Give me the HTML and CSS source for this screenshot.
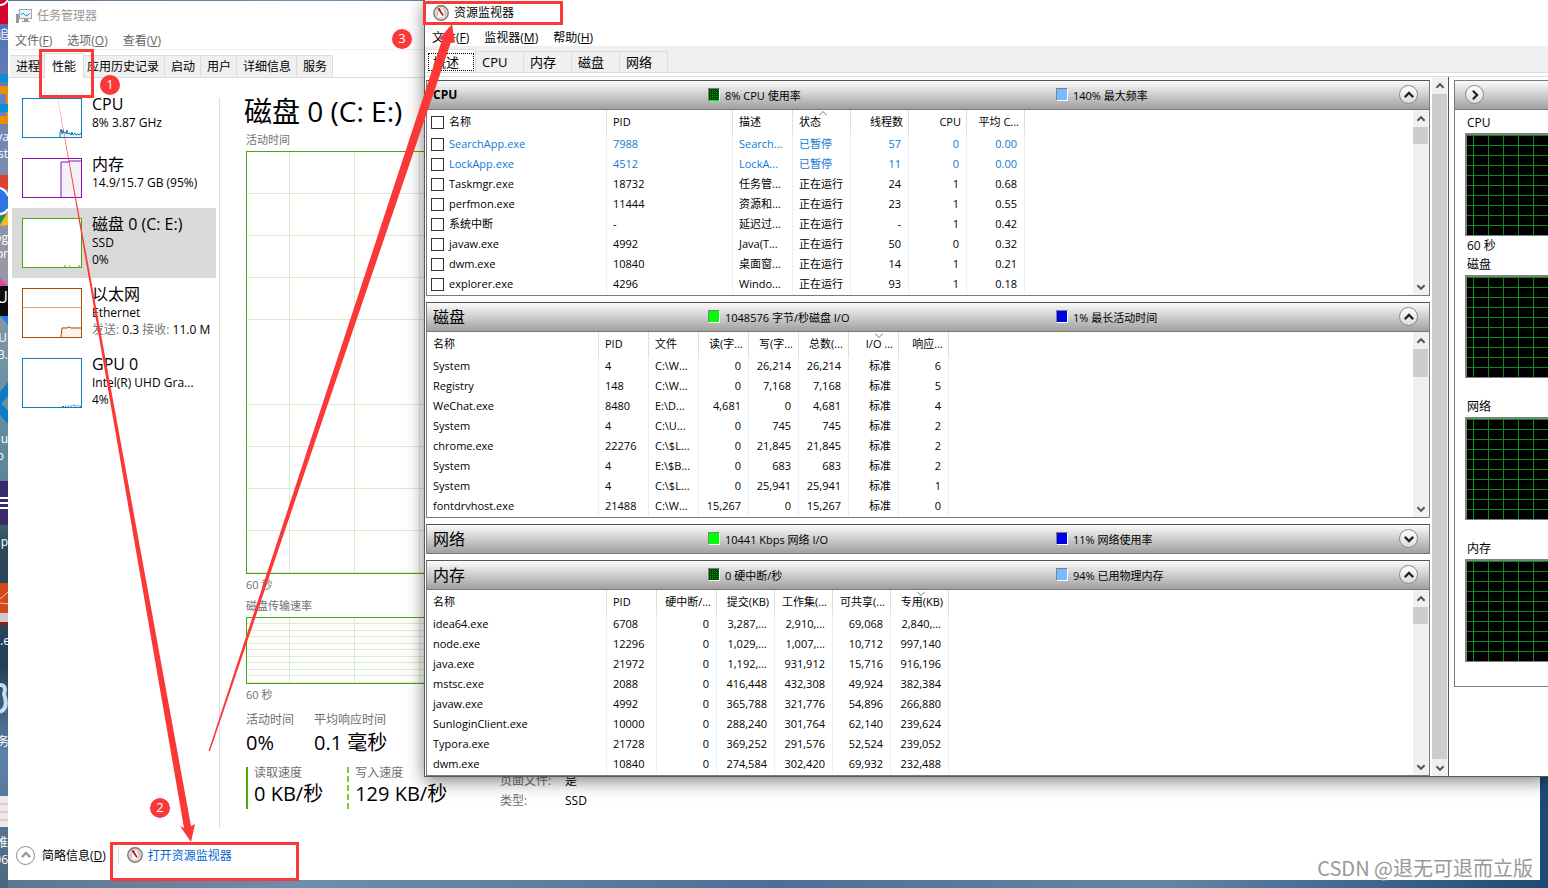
FILE: index.html
```html
<!DOCTYPE html>
<html lang="zh-CN">
<head>
  <meta charset="UTF-8">
  <title>任务管理器 / 资源监视器</title>
  <link rel="stylesheet" href="styles.css">
</head>
<body>

  <!-- shared icons -->
  <svg class="sprite" aria-hidden="true">
    <symbol id="gauge" viewBox="0 0 16 16">
      <circle cx="8" cy="8" r="7.2" fill="#f4f2ee" stroke="#77736f" stroke-width="1.4"/>
      <circle cx="8" cy="8" r="5.2" fill="#fff" stroke="#c9c2b6" stroke-width="1"/>
      <path d="M4.5 10.5a4.3 4.3 0 0 1 1-5M10 4.4a4.3 4.3 0 0 1 1.6 6" fill="none" stroke="#a8a095" stroke-width="1"/>
      <path d="M4.2 3.4l2.3-.5 4.2 7.2-1.2.8z" fill="#c8141c"/>
    </symbol>
    <symbol id="chev-up" viewBox="0 0 10 10"><path d="M2 6.500L5 3.500 8 6.500" fill="none" stroke="currentColor" stroke-width="1.6"/></symbol>
    <symbol id="chev-down" viewBox="0 0 10 10"><path d="M2 3.500L5 6.500 8 3.500" fill="none" stroke="currentColor" stroke-width="1.6"/></symbol>
    <symbol id="chev-right" viewBox="0 0 10 10"><path d="M3.500 2L6.500 5 3.500 8" fill="none" stroke="currentColor" stroke-width="1.6"/></symbol>
  </svg>

  <!-- Desktop, only its left edge shows -->
  <svg class="desktop-icons" aria-hidden="true">
    <rect width="8" height="24" fill="#d2062c"/>
    <path d="M0 5q5 0 8-5" fill="none" stroke="#fff" stroke-width="2"/>
    <rect y="74" width="8" height="8" fill="#0a8fd0"/>
    <rect y="86" width="8" height="38" fill="#f08c00"/>
    <rect y="94" width="6" height="10" fill="#5f86c4"/>
    <rect y="104" width="8" height="8" fill="#0a8fd0"/>
    <rect y="112" width="6" height="4" fill="#5f86c4"/>
    <rect y="175" width="8" height="14" fill="#e0402f"/>
    <path d="M0 188q6 2 8 8v14q-3 4-8 5z" fill="#2e74e4"/>
    <path d="M0 188q6 2 8 8M0 214q6-1 8-5" fill="none" stroke="#fff" stroke-width="2"/>
    <path d="M0 216l6-2-6 10z" fill="#1d9145"/>
    <path d="M0 226l8-14v13z" fill="#f8bd10"/>
    <path d="M0 278l8 8H0z" fill="#e5489a"/>
    <rect y="286" width="8" height="30" fill="#0c0c0e"/>
    <path d="M0 316h8v9z" fill="#1f82ea"/>
    <path d="M8 382v14l-8 9v-13zM0 402l8 9v13l-8-9z" fill="#0a7cc8"/>
    <rect y="481" width="8" height="44" fill="#3a2a6c"/>
    <path d="M0 498h8M0 503h8M0 508h8" stroke="#fff" stroke-width="2"/>
    <rect y="583" width="8" height="30" fill="#d0481c"/>
    <path d="M0 599l8-7M0 603l8 1" stroke="#f3c3a8"/>
    <rect y="613" width="8" height="9" fill="#c9cbd0"/>
    <rect y="622" width="8" height="3" fill="#941a14"/>
    <path d="M0 685q7 0 4 9 5 14-4 18" fill="none" stroke="#c3ddf4" stroke-width="4"/>
    <rect y="796" width="8" height="31" fill="#eee9ea"/>
    <path d="M0 804h8M0 812h8M0 820h8" stroke="#dba5a5"/>
    <g fill="#fff" font-size="12" text-anchor="end">
      <text x="9" y="39">追</text><text x="9" y="141">va</text><text x="8" y="158">st</text>
      <text x="8" y="242">og</text><text x="8" y="258">or</text><text x="8" y="303" font-size="16">U</text>
      <text x="7" y="342">U</text><text x="8" y="359">3.</text><text x="8" y="443">u</text>
      <text x="4" y="460">o</text><text x="8" y="546">p</text><text x="10" y="645">.e</text>
      <text x="9" y="746">务</text><text x="8" y="847">推</text><text x="8" y="864">06</text>
    </g>
  </svg>

  <!-- Task manager -->
  <section class="window taskmgr">
    <header class="titlebar">
      <svg width="16" height="16" viewBox="0 0 16 16">
        <rect x="0" y="6" width="3" height="9" fill="#9a9a9a"/>
        <rect x="3.500" y="1.500" width="12" height="9" fill="#e6f5fd" stroke="#a2a6a9"/>
        <path d="M5 7l2-2 2 2 2 1 3-3" fill="none" stroke="#2a8fc4"/>
        <path d="M8 11h4v2h2v1H6v-1h2z" fill="#999"/>
      </svg>
      <h1>任务管理器</h1>
    </header>
    <nav class="menu">
      <a href="#">文件(<u>F</u>)</a><a href="#">选项(<u>O</u>)</a><a href="#">查看(<u>V</u>)</a>
    </nav>
    <div class="tabs">
      <button>进程</button><button class="active">性能</button><button>应用历史记录</button><button>启动</button><button>用户</button><button>详细信息</button><button>服务</button>
    </div>

    <div class="tm-body">
      <aside>
        <ul class="devices">
          <li>
            <svg class="thumb blue" viewBox="0 0 58 38"><path d="M37 38v-5l1-3 1 5 1-4 1 3 1-1 1 2 1-4 1 4 2-1 1 2 1-3 1 3 2-2 1 2 2-1 1 1 2-2 1 3" fill="#e4f1f9" stroke="#117dbb"/></svg>
            <div><h3>CPU</h3><p>8% 3.87 GHz</p></div>
          </li>
          <li>
            <svg class="thumb purple" viewBox="0 0 58 38"><path d="M38 38V3h8V2h12v36z" fill="#f4f0f7"/><path d="M38 38V3h8V2h12" fill="none" stroke="#8b12ae"/></svg>
            <div><h3>内存</h3><p>14.9/15.7 GB (95%)</p></div>
          </li>
          <li class="tall selected">
            <svg class="thumb green" viewBox="0 0 58 48"><path d="M41 47h2M46 47h1M55 47h2" stroke="#4da60c"/></svg>
            <div><h3>磁盘 0 (C: E:)</h3><p>SSD</p><p>0%</p></div>
          </li>
          <li class="tall">
            <svg class="thumb brown" viewBox="0 0 58 48"><path d="M0 18.500h58" stroke="#d3a583"/><path d="M38 48l1-10h5l2-1 2 1h10v10z" fill="#fcf3eb"/><path d="M38 48l1-9h5l2-1 2 1h10" fill="none" stroke="#a74f01"/></svg>
            <div><h3>以太网</h3><p>Ethernet</p><p><span>发送:</span> 0.3 <span>接收:</span> 11.0 M</p></div>
          </li>
          <li class="tall">
            <svg class="thumb blue" viewBox="0 0 58 48"><path d="M39 47.500h4l1-1 1 1 2-1 2 1 2-2 1 2 2-1 4 1" fill="none" stroke="#117dbb" stroke-dasharray="2 1"/></svg>
            <div><h3>GPU 0</h3><p>Intel(R) UHD Gra...</p><p>4%</p></div>
          </li>
        </ul>
      </aside>

      <main>
        <h2>磁盘 0 (C: E:)</h2>
        <p class="chart-label">活动时间</p>
        <div class="chart grow"></div>
        <p class="chart-time">60 秒</p>
        <p class="chart-label">磁盘传输速率</p>
        <div class="chart rate-chart"></div>
        <p class="chart-time">60 秒</p>
        <div class="stats">
          <div class="stats-left">
            <div class="stat-row">
              <div class="stat"><span>活动时间</span><b>0%</b></div>
              <div class="stat"><span>平均响应时间</span><b>0.1 毫秒</b></div>
            </div>
            <div class="stat-row rates">
              <div class="stat read"><span>读取速度</span><b>0 KB/秒</b></div>
              <div class="stat write"><span>写入速度</span><b>129 KB/秒</b></div>
            </div>
          </div>
          <dl>
            <dt>页面文件:</dt><dd>是</dd>
            <dt>类型:</dt><dd>SSD</dd>
          </dl>
        </div>
      </main>
    </div>

    <footer class="tm-footer">
      <button class="round plain" aria-label="折叠"><svg width="14" height="14"><use href="#chev-up"/></svg></button>
      <a class="brief" href="#">简略信息(<u>D</u>)</a>
      <a class="open-link" href="#"><svg width="16" height="16"><use href="#gauge"/></svg>打开资源监视器</a>
    </footer>
  </section>

  <!-- Resource monitor -->
  <section class="window resmon">
    <header class="titlebar">
      <svg width="16" height="16"><use href="#gauge"/></svg>
      <h1>资源监视器</h1>
    </header>
    <nav class="menu">
      <a href="#">文件(<u>F</u>)</a><a href="#">监视器(<u>M</u>)</a><a href="#">帮助(<u>H</u>)</a>
    </nav>
    <div class="tabs">
      <button class="active"><span>概述</span></button><button>CPU</button><button>内存</button><button>磁盘</button><button>网络</button>
    </div>

    <div class="rm-body">
      <div class="panels">

        <section class="panel">
          <div class="bar">
            <h2 class="bold">CPU</h2>
            <span class="legend"><i class="dark"></i>8% CPU 使用率</span>
            <span class="legend"><i class="sky"></i>140% 最大频率</span>
            <button class="round" aria-label="收起"><svg width="14" height="14"><use href="#chev-up"/></svg></button>
          </div>
          <div class="list">
            <table>
              <colgroup><col class="w180"><col class="w126"><col class="w60"><col class="w58"><col class="w58"><col class="w58"><col class="w58"></colgroup>
              <thead>
                <tr><th><label><input type="checkbox">名称</label></th><th>PID</th><th>描述</th><th class="sort">状态<svg width="8" height="5"><path d="M0 4.500l4-4 4 4"/></svg></th><th class="num">线程数</th><th class="num">CPU</th><th class="num">平均 C...</th></tr>
              </thead>
              <tbody>
                <tr class="paused"><td><label><input type="checkbox">SearchApp.exe</label></td><td>7988</td><td>Search...</td><td>已暂停</td><td class="num">57</td><td class="num">0</td><td class="num">0.00</td></tr>
                <tr class="paused"><td><label><input type="checkbox">LockApp.exe</label></td><td>4512</td><td>LockA...</td><td>已暂停</td><td class="num">11</td><td class="num">0</td><td class="num">0.00</td></tr>
                <tr><td><label><input type="checkbox">Taskmgr.exe</label></td><td>18732</td><td>任务管...</td><td>正在运行</td><td class="num">24</td><td class="num">1</td><td class="num">0.68</td></tr>
                <tr><td><label><input type="checkbox">perfmon.exe</label></td><td>11444</td><td>资源和...</td><td>正在运行</td><td class="num">23</td><td class="num">1</td><td class="num">0.55</td></tr>
                <tr><td><label><input type="checkbox">系统中断</label></td><td>-</td><td>延迟过...</td><td>正在运行</td><td class="num">-</td><td class="num">1</td><td class="num">0.42</td></tr>
                <tr><td><label><input type="checkbox">javaw.exe</label></td><td>4992</td><td>Java(T...</td><td>正在运行</td><td class="num">50</td><td class="num">0</td><td class="num">0.32</td></tr>
                <tr><td><label><input type="checkbox">dwm.exe</label></td><td>10840</td><td>桌面窗...</td><td>正在运行</td><td class="num">14</td><td class="num">1</td><td class="num">0.21</td></tr>
                <tr><td><label><input type="checkbox">explorer.exe</label></td><td>4296</td><td>Windo...</td><td>正在运行</td><td class="num">93</td><td class="num">1</td><td class="num">0.18</td></tr>
              </tbody>
            </table>
            <div class="scroll">
              <button aria-label="向上"><svg width="12" height="12"><use href="#chev-up"/></svg></button>
              <div class="thumb-bar"></div>
              <button aria-label="向下"><svg width="12" height="12"><use href="#chev-down"/></svg></button>
            </div>
          </div>
        </section>

        <section class="panel">
          <div class="bar">
            <h2>磁盘</h2>
            <span class="legend"><i class="lime"></i>1048576 字节/秒磁盘 I/O</span>
            <span class="legend"><i class="navy"></i>1% 最长活动时间</span>
            <button class="round" aria-label="收起"><svg width="14" height="14"><use href="#chev-up"/></svg></button>
          </div>
          <div class="list">
            <table>
              <colgroup><col class="w172"><col class="w50"><col class="w50"><col class="w50"><col class="w50"><col class="w50"><col class="w50"><col class="w50"></colgroup>
              <thead>
                <tr><th>名称</th><th>PID</th><th>文件</th><th class="num">读(字...</th><th class="num">写(字...</th><th class="num">总数(...</th><th class="num sort">I/O ...<svg width="8" height="5"><path d="M0 .5l4 4 4-4"/></svg></th><th class="num">响应...</th></tr>
              </thead>
              <tbody>
                <tr><td>System</td><td>4</td><td>C:\W...</td><td class="num">0</td><td class="num">26,214</td><td class="num">26,214</td><td class="num">标准</td><td class="num">6</td></tr>
                <tr><td>Registry</td><td>148</td><td>C:\W...</td><td class="num">0</td><td class="num">7,168</td><td class="num">7,168</td><td class="num">标准</td><td class="num">5</td></tr>
                <tr><td>WeChat.exe</td><td>8480</td><td>E:\D...</td><td class="num">4,681</td><td class="num">0</td><td class="num">4,681</td><td class="num">标准</td><td class="num">4</td></tr>
                <tr><td>System</td><td>4</td><td>C:\U...</td><td class="num">0</td><td class="num">745</td><td class="num">745</td><td class="num">标准</td><td class="num">2</td></tr>
                <tr><td>chrome.exe</td><td>22276</td><td>C:\$L...</td><td class="num">0</td><td class="num">21,845</td><td class="num">21,845</td><td class="num">标准</td><td class="num">2</td></tr>
                <tr><td>System</td><td>4</td><td>E:\$B...</td><td class="num">0</td><td class="num">683</td><td class="num">683</td><td class="num">标准</td><td class="num">2</td></tr>
                <tr><td>System</td><td>4</td><td>C:\$L...</td><td class="num">0</td><td class="num">25,941</td><td class="num">25,941</td><td class="num">标准</td><td class="num">1</td></tr>
                <tr><td>fontdrvhost.exe</td><td>21488</td><td>C:\W...</td><td class="num">15,267</td><td class="num">0</td><td class="num">15,267</td><td class="num">标准</td><td class="num">0</td></tr>
              </tbody>
            </table>
            <div class="scroll">
              <button aria-label="向上"><svg width="12" height="12"><use href="#chev-up"/></svg></button>
              <div class="thumb-bar long"></div>
              <button aria-label="向下"><svg width="12" height="12"><use href="#chev-down"/></svg></button>
            </div>
          </div>
        </section>

        <section class="panel">
          <div class="bar">
            <h2>网络</h2>
            <span class="legend"><i class="lime"></i>10441 Kbps 网络 I/O</span>
            <span class="legend"><i class="navy"></i>11% 网络使用率</span>
            <button class="round" aria-label="展开"><svg width="14" height="14"><use href="#chev-down"/></svg></button>
          </div>
        </section>

        <section class="panel">
          <div class="bar">
            <h2>内存</h2>
            <span class="legend"><i class="dark idle"></i>0 硬中断/秒</span>
            <span class="legend"><i class="sky"></i>94% 已用物理内存</span>
            <button class="round" aria-label="收起"><svg width="14" height="14"><use href="#chev-up"/></svg></button>
          </div>
          <div class="list">
            <table>
              <colgroup><col class="w180"><col class="w50"><col class="w60"><col class="w58"><col class="w58"><col class="w58"><col class="w58"></colgroup>
              <thead>
                <tr><th>名称</th><th>PID</th><th class="num">硬中断/...</th><th class="num">提交(KB)</th><th class="num">工作集(...</th><th class="num">可共享(...</th><th class="num sort">专用(KB)<svg width="8" height="5"><path d="M0 .5l4 4 4-4"/></svg></th></tr>
              </thead>
              <tbody>
                <tr><td>idea64.exe</td><td>6708</td><td class="num">0</td><td class="num">3,287,...</td><td class="num">2,910,...</td><td class="num">69,068</td><td class="num">2,840,...</td></tr>
                <tr><td>node.exe</td><td>12296</td><td class="num">0</td><td class="num">1,029,...</td><td class="num">1,007,...</td><td class="num">10,712</td><td class="num">997,140</td></tr>
                <tr><td>java.exe</td><td>21972</td><td class="num">0</td><td class="num">1,192,...</td><td class="num">931,912</td><td class="num">15,716</td><td class="num">916,196</td></tr>
                <tr><td>mstsc.exe</td><td>2088</td><td class="num">0</td><td class="num">416,448</td><td class="num">432,308</td><td class="num">49,924</td><td class="num">382,384</td></tr>
                <tr><td>javaw.exe</td><td>4992</td><td class="num">0</td><td class="num">365,788</td><td class="num">321,776</td><td class="num">54,896</td><td class="num">266,880</td></tr>
                <tr><td>SunloginClient.exe</td><td>10000</td><td class="num">0</td><td class="num">288,240</td><td class="num">301,764</td><td class="num">62,140</td><td class="num">239,624</td></tr>
                <tr><td>Typora.exe</td><td>21728</td><td class="num">0</td><td class="num">369,252</td><td class="num">291,576</td><td class="num">52,524</td><td class="num">239,052</td></tr>
                <tr><td>dwm.exe</td><td>10840</td><td class="num">0</td><td class="num">274,584</td><td class="num">302,420</td><td class="num">69,932</td><td class="num">232,488</td></tr>
              </tbody>
            </table>
            <div class="scroll">
              <button aria-label="向上"><svg width="12" height="12"><use href="#chev-up"/></svg></button>
              <div class="thumb-bar"></div>
              <button aria-label="向下"><svg width="12" height="12"><use href="#chev-down"/></svg></button>
            </div>
          </div>
        </section>
      </div>

      <div class="scroll outer">
        <button aria-label="向上"><svg width="12" height="12"><use href="#chev-up"/></svg></button>
        <div class="thumb-bar full"></div>
        <button aria-label="向下"><svg width="12" height="12"><use href="#chev-down"/></svg></button>
      </div>

      <aside class="graphs">
        <div class="graphs-panel">
          <div class="bar"><button class="round" aria-label="隐藏图表"><svg width="14" height="14"><use href="#chev-right"/></svg></button></div>
          <figure><figcaption>CPU</figcaption><div class="graph"></div><p>60 秒</p></figure>
          <figure><figcaption>磁盘</figcaption><div class="graph"></div><p></p></figure>
          <figure><figcaption>网络</figcaption><div class="graph"></div><p></p></figure>
          <figure><figcaption>内存</figcaption><div class="graph"></div><p></p></figure>
        </div>
      </aside>
    </div>
  </section>

  <!-- Numbered steps drawn over both windows -->
  <svg class="marks">
    <g fill="none" stroke="#fb3838" stroke-width="3">
      <rect x="40.500" y="50.500" width="52" height="46"/>
      <rect x="111.500" y="843.500" width="186" height="36"/>
      <rect x="424.500" y="2.500" width="137" height="21"/>
    </g>
    <g fill="#fb3838">
      <path d="M55 83L184 828l-4-2 11 16 4-18-4 2z"/>
      <path d="M208.500 751h1.500L451 42l4 1-3-19-13 15 3 1z"/>
      <circle cx="110" cy="85" r="10"/><circle cx="160" cy="808" r="10"/><circle cx="402" cy="39" r="10"/>
    </g>
    <g fill="#fff" font-size="13" text-anchor="middle">
      <text x="110" y="89">1</text><text x="160" y="812">2</text><text x="402" y="43">3</text>
    </g>
  </svg>

  <p class="watermark">CSDN @退无可退而立版</p>

</body>
</html>
```
FILE: styles.css
```css
* {
  box-sizing: border-box;
}

body {
  margin: 0;
  min-height: 100vh;
  position: relative;
  overflow: hidden;
  font-family: "Open Sans", "Noto Sans CJK SC", sans-serif;
  font-size: 12px;
  color: #000;
  background: linear-gradient(to right, #5d7690, #6f8dad 20%, #4d6f93 50%, #6585a5 75%, #1d4a74);
}

h1, h2, h3, p, ul, dl, dd, figure {
  margin: 0;
  padding: 0;
  font-weight: normal;
}

a {
  color: inherit;
  text-decoration: none;
}

button {
  font: inherit;
  color: inherit;
  padding: 0;
  border: none;
  background: none;
}

.sprite {
  position: absolute;
  width: 0;
  height: 0;
}

.desktop-icons {
  position: absolute;
  left: 0;
  top: 0;
  width: 8px;
  height: 100%;
  background: linear-gradient(#4a6fb8, #7186b4 15%, #9a96a6 30%, #6d93a6 42%, #5c8598 54%, #2d4858 62%, #24405a 75%, #5d83a8 85%, #4d6680);
}

.window {
  position: absolute;
  background: #fff;
  display: flex;
  flex-direction: column;
}

.titlebar {
  display: flex;
  align-items: center;
  gap: 5px;
}

.titlebar h1 {
  font-size: 12px;
  line-height: 16px;
}

.menu {
  display: flex;
  gap: 15px;
}

.tabs {
  display: flex;
  align-items: flex-end;
}

.tabs button {
  background: #f0f0f0;
  border: 1px solid #dcdcdc;
  border-bottom: none;
  border-left: none;
}

.tabs .active {
  background: #fff;
}

/* ---- task manager ---- */
.taskmgr {
  top: 1px;
  left: 8px;
  right: 8px;
  bottom: 8px;
}

.taskmgr .titlebar {
  height: 30px;
  padding-left: 8px;
  color: #999;
}

.taskmgr .menu {
  height: 19px;
  padding-left: 7px;
  line-height: 20px;
  color: #666;
  border-bottom: 1px solid #f0f0f0;
}

.taskmgr .tabs {
  height: 28px;
  padding-left: 2px;
  border-bottom: 1px solid #dcdcdc;
}

.taskmgr .tabs button {
  height: 22px;
  padding: 0 5px 0 6px;
  line-height: 21px;
}

.taskmgr .tabs .active {
  position: relative;
  z-index: 1;
  height: 25px;
  padding: 0 7px;
  margin: 0 -3px -1px -2px;
  border-left: 1px solid #dcdcdc;
}

.tm-body {
  flex: 1;
  display: flex;
  padding-top: 20px;
}

.tm-body aside {
  flex: 0 0 212px;
  border-right: 1px solid #dcdcdc;
}

.devices {
  list-style: none;
  margin: -10px 3px 0 4px;
}

.devices li {
  display: flex;
  gap: 10px;
  height: 60px;
  padding: 0 10px;
  white-space: nowrap;
}

.devices .tall {
  height: 70px;
}

.devices .selected {
  background: #d9d9d9;
}

.devices h3 {
  margin-top: 6px;
  font-size: 16px;
  line-height: 20px;
}

.devices p {
  line-height: 17px;
}

.devices p span {
  color: #777;
}

.thumb {
  flex: none;
  width: 60px;
  height: 40px;
  margin-top: 10px;
  background: #fff;
  border: 1px solid;
}

.tall .thumb {
  height: 50px;
}

.blue { border-color: #117dbb; }
.purple { border-color: #8b12ae; }
.green { border-color: #4da60c; }
.brown { border-color: #a74f01; }

.tm-body aside {
  flex-shrink: 0;
  min-width: 0;
}

.taskmgr main {
  flex: 1;
  display: flex;
  flex-direction: column;
  padding: 0 20px 0 26px;
}

main h2 {
  font-size: 28px;
  line-height: 26px;
  margin: 0 0 5px -2px;
}

.chart-label, .chart-time {
  font-size: 11px;
  line-height: 22px;
  color: #707070;
}

.chart-time {
  line-height: 21px;
}

.chart {
  border: 1px solid #4da60c;
  background-image:
    linear-gradient(to right, #d9ebcb 1px, transparent 1px),
    repeating-linear-gradient(transparent 0, transparent calc(10% - 1px), #d9ebcb calc(10% - 1px), #d9ebcb 10%);
  background-size: 65px 100%, 100% 100%;
  background-position: 42px 0, 0 0;
}

.grow {
  flex: 1;
}

.rate-chart {
  height: 67px;
}

.stats {
  display: flex;
  padding: 6px 0 17px;
}

.stats-left {
  flex: 0 0 254px;
  padding-bottom: 2px;
}

.stat-row {
  display: flex;
  gap: 20px;
}

.stat span, .stat b {
  display: block;
  line-height: 18px;
  color: #707070;
}

.stat b {
  font-size: 20px;
  font-weight: normal;
  line-height: 28px;
  color: #000;
}

.stat:first-child {
  min-width: 48px;
}

.rates {
  margin-top: 10px;
  gap: 24px;
}

.rates .stat {
  padding-left: 6px;
  border-left: 2px solid #4da60c;
}

.rates .stat span {
  line-height: 12px;
}

.rates .stat b {
  line-height: 30px;
}

.rates .write {
  border-left: 2px dashed #7bd024;
}

.stats dl {
  align-self: flex-end;
  display: grid;
  grid-template-columns: 65px auto;
  line-height: 20px;
}

.stats dt {
  color: #707070;
}

.tm-footer {
  height: 52px;
  padding: 2px 8px 0;
  display: flex;
  align-items: center;
}

.brief {
  margin: 0 12px 0 7px;
}

.open-link {
  display: flex;
  align-items: center;
  gap: 5px;
  padding-left: 8px;
  border-left: 1px solid #dcdcdc;
  color: #0066cc;
}

.round {
  width: 19px;
  height: 19px;
  display: flex;
  align-items: center;
  justify-content: center;
  border: 1px solid #8a8a8a;
  border-radius: 50%;
  background: linear-gradient(#fff, #dcdcdc);
  color: #222;
}

.plain {
  background: #fff;
  color: #999;
}

/* ---- resource monitor ---- */
.resmon {
  top: 0;
  left: 424px;
  right: 0;
  border-left: 1px solid #5a5a5a;
  border-bottom: 1px solid #5a5a5a;
  box-shadow: 0 4px 16px rgba(0, 0, 0, 0.5);
}

.resmon .titlebar {
  height: 25px;
  padding-left: 8px;
}

.resmon .menu {
  height: 21px;
  padding: 4px 0 0 7px;
  line-height: 18px;
}

.resmon .tabs {
  height: 27px;
  padding-left: 1px;
  font-size: 13px;
  background: #f0f0f0;
  border-bottom: 1px solid #dcdcdc;
}

.resmon .tabs button {
  width: 48px;
  height: 21px;
  padding-left: 6px;
  line-height: 18px;
  text-align: left;
}

.resmon .tabs .active {
  width: 50px;
  height: 23px;
  padding: 2px 1px 1px 2px;
}

.tabs .active span {
  display: block;
}

.resmon .active span {
  padding-left: 4px;
  line-height: 16px;
  border: 1px dotted #000;
}

.rm-body {
  display: flex;
  margin-top: 3px;
  border-top: 1px solid #dcdcdc;
}

.panels {
  flex: 1;
  padding: 3px 2px 0 1px;
  display: flex;
  flex-direction: column;
  gap: 6px;
}

.panel {
  border: 1px solid #7a7a7a;
  border-top-color: #555;
}

.bar {
  height: 29px;
  display: grid;
  grid-template-columns: 275px 348px 1fr 19px;
  align-items: center;
  padding: 0 11px 1px 6px;
  background: linear-gradient(#fbfbfb, #a0a0a0);
}

.panel .bar:not(:last-child), .graphs .bar {
  border-bottom: 1px solid #7a7a7a;
}

.panel:nth-child(3) .bar {
  height: 28px;
}

.bar h2 {
  font-size: 16px;
  line-height: 20px;
}

.bar .bold {
  font-size: 12px;
  font-weight: bold;
}

.bar .round {
  grid-column: 4;
}

.legend {
  display: flex;
  align-items: center;
  gap: 5px;
  font-size: 11px;
}

.legend i {
  width: 12px;
  height: 13px;
  border: 1px solid #808080;
  border-right-color: #fff;
  border-bottom-color: #fff;
}

.legend .dark {
  background: repeating-linear-gradient(to right, #004000 0 1px, transparent 1px 2px), repeating-linear-gradient(#004a00 0 1px, #00a000 1px 2px);
  border-bottom-color: #00ff00;
}

.legend .idle { border-bottom-color: #fff; }
.legend .sky { background: #78b9ff; }
.legend .lime { background: #00ff00; }
.legend .navy { background: #0000e6; }

.list {
  display: flex;
  justify-content: space-between;
  align-items: flex-start;
  height: 185px;
  font-size: 11px;
}

table {
  table-layout: fixed;
  border-collapse: separate;
  border-spacing: 0;
  width: 0;
}

.w180 { width: 180px; }
.w172 { width: 172px; }
.w126 { width: 126px; }
.w60 { width: 60px; }
.w58 { width: 58px; }
.w50 { width: 50px; }

th, td {
  height: 20px;
  padding: 0 0 0 6px;
  line-height: 20px;
  font-weight: normal;
  text-align: left;
  white-space: nowrap;
  border-right: 1px solid #e6effa;
}

th {
  height: 24px;
  line-height: 24px;
  border-right-color: #dedede;
}

td.num, th.num {
  padding: 0 7px 0 0;
  text-align: right;
}

th.num {
  padding-right: 5px;
}

.sort {
  position: relative;
}

.sort svg {
  position: absolute;
  left: 26px;
  top: 1px;
  fill: none;
  stroke: #777;
}

.paused {
  color: #0f7ad4;
}

label {
  display: flex;
  align-items: center;
  gap: 5px;
  margin-left: -2px;
}

input[type="checkbox"] {
  appearance: none;
  width: 13px;
  height: 13px;
  margin: 0;
  border: 1px solid #333;
  background: #fff;
}

.scroll {
  width: 16px;
  align-self: stretch;
  display: flex;
  flex-direction: column;
  border-right: 1px solid #f6f6f6;
  background: #f0f0f0;
  color: #555;
}

.scroll button {
  flex: none;
  height: 17px;
  display: flex;
  align-items: center;
  justify-content: center;
}

.scroll button:last-child {
  margin-top: auto;
}

.thumb-bar {
  height: 17px;
  background: #cdcdcd;
}

.thumb-bar.long {
  height: 28px;
}

.thumb-bar.full {
  flex: 1;
}

.graphs {
  flex: 0 0 100px;
  padding: 3px 0 0 5px;
  border-left: 1px solid #555;
}

.graphs-panel {
  padding-bottom: 5px;
  border: 1px solid #7a7a7a;
  border-right: none;
}

.graphs .bar {
  display: flex;
  padding-left: 10px;
}

figure {
  padding-left: 10px;
}

figcaption, figure p {
  height: 19px;
  padding-left: 2px;
  line-height: 19px;
}

figcaption {
  height: 20px;
  line-height: 20px;
}

.bar + figure {
  margin-top: 3px;
}

.graph {
  height: 103px;
  border: 2px solid #808080;
  border-width: 2px 0 1px 2px;
  background-color: #000;
  background-image:
    linear-gradient(to right, #0a8a1a 1px, transparent 1px),
    linear-gradient(#0a8a1a 1px, transparent 1px);
  background-size: 15px 10px;
  background-position: 6px 0, 0 10px;
}

/* ---- overlay ---- */
.marks {
  position: absolute;
  left: 0;
  top: 0;
  width: 100%;
  height: 100%;
  pointer-events: none;
}

.watermark {
  position: absolute;
  right: 15px;
  bottom: 6px;
  font-family: "Noto Sans CJK SC", sans-serif;
  font-size: 20px;
  line-height: 28px;
  color: #999;
  text-shadow: 1px 1px 1px #fff;
}
```
